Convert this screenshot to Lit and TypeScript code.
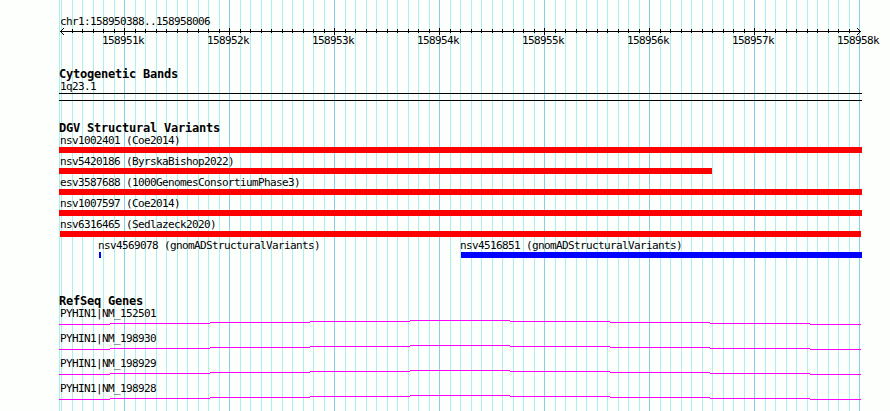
import { LitElement, css, html, svg } from "lit";
import { customElement, property } from "lit/decorators.js";
import { styleMap } from "lit/directives/style-map.js";

type Variant = {
	name: string;
	start: number;
	end: number;
	label: number;
	gain?: boolean;
};

// pixel position of the displayed region
const LEFT = 59;
const FIRST_MAJOR = 124;
const TICK = 10.5;

const rows: Variant[][] = [
	[{ name: "nsv1002401 (Coe2014)", start: 59, end: 862, label: 60 }],
	[{ name: "nsv5420186 (ByrskaBishop2022)", start: 59, end: 712, label: 60 }],
	[{ name: "esv3587688 (1000GenomesConsortiumPhase3)", start: 59, end: 862, label: 60 }],
	[{ name: "nsv1007597 (Coe2014)", start: 59, end: 862, label: 60 }],
	[{ name: "nsv6316465 (Sedlazeck2020)", start: 60, end: 861, label: 60 }],
	[
		{ name: "nsv4569078 (gnomADStructuralVariants)", start: 99, end: 101, label: 98, gain: true },
		{ name: "nsv4516851 (gnomADStructuralVariants)", start: 461, end: 862, label: 460, gain: true },
	],
];

const genes = ["NM_152501", "NM_198930", "NM_198929", "NM_198928"];

const ticks = Array.from({ length: 77 }, (_, i) => ({
	x: FIRST_MAJOR + Math.ceil((i - 6) * TICK),
	major: (i - 6) % 10 === 0,
}));

const textStyles = css`
  .label {
    font-family: "DejaVu Sans Mono", monospace;
    font-size: 11px;
    line-height: 13px;
    letter-spacing: -0.622px;
    white-space: pre;
  }
`;

@customElement("grid-lines")
export class GridLines extends LitElement {
	static get styles() {
		return css`
      svg {
        display: block;
      }
      .minor {
        fill: #afeeee;
      }
      .major {
        fill: #87ceeb;
      }`;
	}

	render() {
		return html`
      <svg width="890" height="411" shape-rendering="crispEdges">
        <rect class="minor" x=${LEFT} y="0" width="1" height="411"></rect>
        ${ticks.map((t) => svg`<rect class=${t.major ? "major" : "minor"} x=${t.x} y="0" width="1" height="411"></rect>`)}
      </svg>
    `;
	}
}

@customElement("scale-ruler")
export class ScaleRuler extends LitElement {
	static get styles() {
		return [textStyles, css`
      :host {
        display: block;
      }
      .range {
        padding-left: 60px;
        height: 13px;
      }
      svg {
        display: block;
      }
      .numbers {
        display: grid;
        grid-template-columns: repeat(8, 105px);
        width: 840px;
        height: 13px;
        margin-top: -1px;
        padding: 0 0 1px 102px;
      }`];
	}

	render() {
		return html`
      <div class="label range">chr1:158950388..158958006</div>
      <svg width="890" height="7" shape-rendering="crispEdges">
        <rect x="60" y="3" width="801" height="1"></rect>
        ${ticks.slice(1, -1).map((t) => svg`<rect x=${t.x} y=${t.major ? 0 : 1} width="1" height=${t.major ? 7 : 4}></rect>`)}
        <path d="M61 2h1v1h-1zM62 1h1v1h-1zM63 0h1v1h-1zM61 4h1v1h-1zM62 5h1v1h-1zM63 6h1v1h-1z"></path>
        <path d="M859 2h1v1h-1zM858 1h1v1h-1zM857 0h1v1h-1zM859 4h1v1h-1zM858 5h1v1h-1zM857 6h1v1h-1z"></path>
      </svg>
      <div class="numbers">
        ${[1, 2, 3, 4, 5, 6, 7, 8].map((n) => html`<span class="label">15895${n}k</span>`)}
      </div>
    `;
	}
}

@customElement("variant-row")
export class VariantRow extends LitElement {
	@property({ attribute: false }) items: Variant[] = [];

	static get styles() {
		return [textStyles, css`
      :host {
        display: grid;
        height: 21px;
      }
      .variant {
        grid-area: 1 / 1;
      }
      .label {
        height: 13px;
      }
      .bar {
        height: 6px;
        background: #ff0000;
      }
      .gain .bar {
        background: #0000ff;
      }`];
	}

	render() {
		return this.items.map((v) => html`
      <div class="variant ${v.gain ? "gain" : ""}">
        <div class="label" style=${styleMap({ marginLeft: `${v.label}px` })}>${v.name}</div>
        <div class="bar" style=${styleMap({ marginLeft: `${v.start}px`, width: `${v.end - v.start}px` })}></div>
      </div>
    `);
	}
}

@customElement("gene-row")
export class GeneRow extends LitElement {
	@property() name = "";

	static get styles() {
		return [textStyles, css`
      :host {
        display: block;
        height: 25px;
      }
      .label {
        padding-left: 60px;
        height: 13px;
      }
      svg {
        display: block;
        fill: #ff00ff;
      }`];
	}

	render() {
		// the intron is stepped up to the middle and back down
		const stops = [59, 110, 210, 310, 410, 510, 610, 710, 810, 861];
		return html`
      <div class="label">PYHIN1|${this.name}</div>
      <svg width="890" height="5" shape-rendering="crispEdges">
        ${stops.slice(0, -1).map((x, i) => svg`<rect x=${x} y=${Math.abs(4 - i)} width=${stops[i + 1] - x} height="1"></rect>`)}
      </svg>
    `;
	}
}

@customElement("app-root")
export class AppRoot extends LitElement {
	static get styles() {
		return [textStyles, css`
      :host {
        display: grid;
        width: 890px;
        height: 411px;
        overflow: hidden;
        background: #fdfffc;
        color: #000000;
      }
      grid-lines,
      main {
        grid-area: 1 / 1;
      }
      main {
        padding-top: 15px;
      }
      h2 {
        margin: 0;
        padding-left: 59px;
        height: 12px;
        font: bold 12px/13px "DejaVu Sans Mono", monospace;
        letter-spacing: -0.224px;
        white-space: pre;
      }
      .cytoband {
        padding-top: 20px;
      }
      .cytoband .label {
        padding-left: 60px;
      }
      .band {
        box-sizing: border-box;
        width: 803px;
        height: 8px;
        margin-left: 59px;
        border: solid #000000;
        border-width: 1px 0;
      }
      .variants {
        padding-top: 21px;
      }
      .genes {
        padding-top: 35px;
      }`];
	}

	render() {
		return html`
      <grid-lines></grid-lines>
      <main>
        <scale-ruler></scale-ruler>
        <section class="cytoband">
          <h2>Cytogenetic Bands</h2>
          <div class="label">1q23.1</div>
          <div class="band"></div>
        </section>
        <section class="variants">
          <h2>DGV Structural Variants</h2>
          ${rows.map((r) => html`<variant-row .items=${r}></variant-row>`)}
        </section>
        <section class="genes">
          <h2>RefSeq Genes</h2>
          ${genes.map((g) => html`<gene-row .name=${g}></gene-row>`)}
        </section>
      </main>
    `;
	}
}

declare global {
	interface HTMLElementTagNameMap {
		"app-root": AppRoot;
		"grid-lines": GridLines;
		"scale-ruler": ScaleRuler;
		"variant-row": VariantRow;
		"gene-row": GeneRow;
	}
}
